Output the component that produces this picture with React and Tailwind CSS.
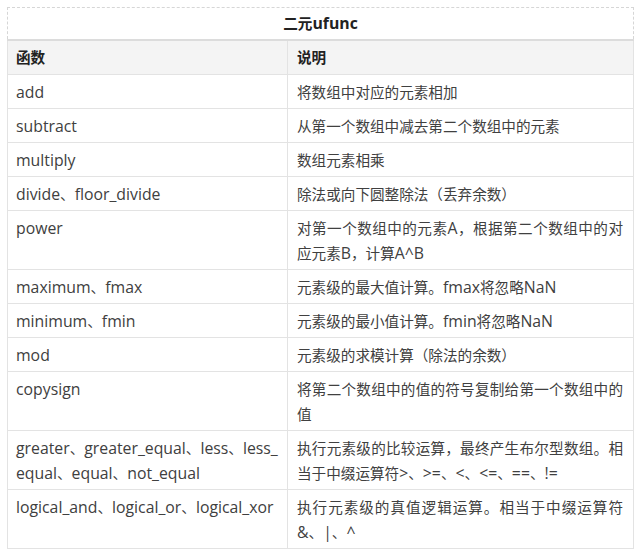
const rows = [
  { name: ['add'], desc: ['将数组中对应的元素相加'] },
  { name: ['subtract'], desc: ['从第一个数组中减去第二个数组中的元素'] },
  { name: ['multiply'], desc: ['数组元素相乘'] },
  { name: ['divide、floor_divide'], desc: ['除法或向下圆整除法（丢弃余数）'] },
  { name: ['power'], desc: ['对第一个数组中的元素A，根据第二个数组中的对', '应元素B，计算A^B'] },
  { name: ['maximum、fmax'], desc: ['元素级的最大值计算。fmax将忽略NaN'] },
  { name: ['minimum、fmin'], desc: ['元素级的最小值计算。fmin将忽略NaN'] },
  { name: ['mod'], desc: ['元素级的求模计算（除法的余数）'] },
  { name: ['copysign'], desc: ['将第二个数组中的值的符号复制给第一个数组中的', '值'] },
  {
    name: ['greater、greater_equal、less、less_', 'equal、equal、not_equal'],
    desc: ['执行元素级的比较运算，最终产生布尔型数组。相', '当于中缀运算符>、>=、<、<=、==、!='],
  },
  { name: ['logical_and、logical_or、logical_xor'], desc: ['执行元素级的真值逻辑运算。相当于中缀运算符', '&、|、^'] },
];

const CJK = /([\u3000-\u303f\u4e00-\u9fff\uff00-\uffef]+)/;

// 中文和西文字号分开，贴近原图的字宽
function Mixed({ text }) {
  return text.split(CJK).map((part, i) =>
    !part ? null : CJK.test(part) ? (
      <span key={i} className="text-[14.6px] leading-none font-['Noto_Sans_CJK_SC',sans-serif]">
        {part}
      </span>
    ) : (
      <span key={i} className="text-[15.8px] leading-none font-['Open_Sans',sans-serif]">
        {part}
      </span>
    )
  );
}

function Lines({ lines }) {
  return lines.map((l, i) => (
    <div
      key={i}
      className={
        i < lines.length - 1
          ? 'h-[25px] whitespace-nowrap text-justify [text-align-last:justify]'
          : 'h-[25px] whitespace-nowrap'
      }
    >
      <Mixed text={l} />
    </div>
  ));
}

export default function App() {
  return (
    <div
      className="w-[640px] h-[554px] bg-white pt-[7px] pl-[7px] text-[15px] leading-[25px] text-[#404040]"
      style={{ fontFamily: '"Open Sans", "Noto Sans CJK SC", sans-serif' }}
    >
      <div className="w-[627px]">
        <div className="h-[32px] border-t border-x border-dashed border-[#d6d6d6] flex items-center justify-center font-bold text-[#222]">
          <div className="h-[25px]">
            <Mixed text="二元ufunc" />
          </div>
        </div>
        <table className="w-full table-fixed border-collapse">
          <thead>
            <tr className="bg-[#f4f4f4] border-t-2 border-[#dcdcdc]">
              <th className="w-[280px] h-[34px] text-left font-bold text-[#222] pl-[8px] border border-[#e3e3e3] border-t-[#dcdcdc]">
                <div className="h-[25px]">
                  <Mixed text="函数" />
                </div>
              </th>
              <th className="text-left font-bold text-[#222] pl-[9px] border border-[#e3e3e3] border-t-[#dcdcdc]">
                <div className="h-[25px]">
                  <Mixed text="说明" />
                </div>
              </th>
            </tr>
          </thead>
          <tbody>
            {rows.map((r, i) => (
              <tr key={i}>
                <td className="align-top pl-[8px] pr-[10px] pt-[5px] pb-[3px] border border-[#e3e3e3]">
                  <Lines lines={r.name} />
                </td>
                <td className="align-top pl-[9px] pr-[10px] pt-[5px] pb-[3px] border border-[#e3e3e3]">
                  <Lines lines={r.desc} />
                </td>
              </tr>
            ))}
          </tbody>
        </table>
      </div>
    </div>
  );
}
